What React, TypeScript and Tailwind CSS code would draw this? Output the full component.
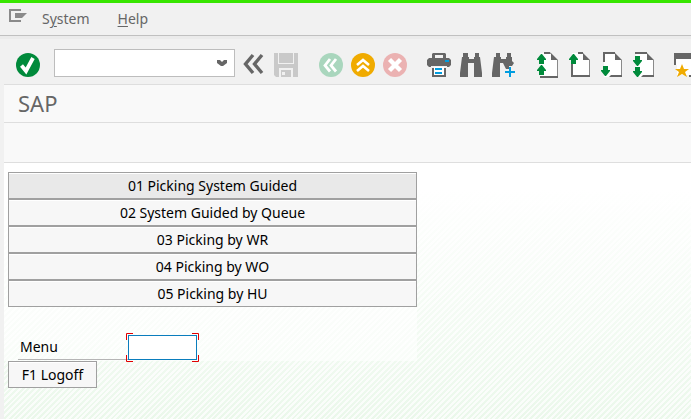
import type { ReactNode } from "react";

const entries = [
  "01 Picking System Guided",
  "02 System Guided by Queue",
  "03 Picking by WR",
  "04 Picking by WO",
  "05 Picking by HU",
];

function Tool({ label, children, disabled = false }: { label: string; children: ReactNode; disabled?: boolean }) {
  return (
    <button type="button" aria-label={label} disabled={disabled} className="h-6 w-6 shrink-0">
      <svg viewBox="0 0 24 24" className="block h-6 w-6 overflow-visible">{children}</svg>
    </button>
  );
}

function Up({ x, y }: { x: number; y: number }) {
  return <path transform={`translate(${x} ${y})`} fill="#008a3b" d="M4 0h1l4 5v1H7v4H2V6H0V5z" />;
}

function Down({ x, y }: { x: number; y: number }) {
  return <path transform={`translate(${x} ${y})`} fill="#008a3b" d="M2 0h5v4h2v1L5 10H4L0 5V4h2z" />;
}

function Sheet() {
  return (
    <>
      <path fill="#fff" d="M5 0h11l7 7v17H5z" />
      <path fill="#666" d="M16 0l7 7h-7z" />
      <path fill="#8a8a8a" d="M22 7h1v17h-1z" />
    </>
  );
}

function Toolbar() {
  return (
    <div className="flex h-[46px] items-end overflow-hidden border-b border-[#dedede] bg-[#f1f1f1] pb-[7px] pl-3">
      <Tool label="Enter">
        <circle cx="12" cy="12" r="12" fill="#008a3b" />
        <path d="M5.500 12.500l4.500 5.500L17 5" fill="none" stroke="#fff" strokeWidth="3.8" />
      </Tool>
      <div className="relative ml-[14px] w-[181px] shrink-0">
        <input aria-label="Command" className="block h-7 w-full border border-[#bdbdbd] bg-white px-2 pr-7 text-sm outline-none" />
        <svg viewBox="0 0 10 6" className="pointer-events-none absolute right-2 top-[11px] h-[6px] w-[10px]">
          <path d="M0 0h3l2 2 2-2h3v3L6 6H4L0 3z" fill="#666" />
        </svg>
      </div>
      <div className="ml-2 flex shrink-0">
        <Tool label="Collapse command field">
          <path d="M10 2L2.500 11l7.500 9M19 2l-7.500 9 7.500 9" fill="none" stroke="#666" strokeWidth="3.4" />
        </Tool>
      </div>
      <div className="ml-[7px] flex shrink-0">
        <Tool label="Save" disabled>
          <path fill="#c9c9c9" d="M0 0h4v11h16V0h4v24h-5v-9H5v9H2l-2-2z" />
          <path fill="#c9c9c9" d="M5 0h14v10H5z" />
          <path fillRule="evenodd" fill="#c9c9c9" d="M7 17h10v7H7zM8 19v3h3v-3z" />
        </Tool>
      </div>
      <div className="ml-[21px] flex shrink-0 gap-2">
        <Tool label="Back" disabled>
          <circle cx="12" cy="12" r="12" fill="#a9d6bd" />
          <path d="M11 6l-5 6.500 5 6M17 6l-5 6.500 5 6" fill="none" stroke="#fff" strokeWidth="2.8" />
        </Tool>
        <Tool label="Exit">
          <circle cx="12" cy="12" r="12" fill="#f0ab00" />
          <path d="M6 12l6-5 6 5M6 18l6-5 6 5" fill="none" stroke="#fff" strokeWidth="2.6" />
        </Tool>
        <Tool label="Cancel" disabled>
          <circle cx="12" cy="12" r="12" fill="#ebb2b2" />
          <path d="M6.500 6.500l11 11M17.500 6.500l-11 11" fill="none" stroke="#fff" strokeWidth="4.4" />
        </Tool>
      </div>
      <div className="ml-5 flex shrink-0 gap-2">
        <Tool label="Print">
          <path fillRule="evenodd" fill="#666" d="M5 1l1-1h12l1 1v4h3l2 2v5l-2 2H2l-2-2V7l2-2h3zM8 2v3h8V2z" />
          <path fill="#f1f1f1" d="M4 13h16v2H4z" />
          <path fill="#666" d="M5 15h14v9H5z" />
          <path fill="#fff" d="M7 14h10v8H7z" />
          <path fill="#009de0" d="M18 7h4v2h-4zM8 15h7v2H8zM8 19h7v2H8z" />
        </Tool>
        <Tool label="Find">
          <path fill="#666" d="M4 0h5v4h1v2h5V4h1V0h4v4h1l2 16v4h-8V10H9v14H1v-4L3 4h1z" />
        </Tool>
        <Tool label="Find next">
          <path fill="#666" d="M5 0h4v4h1v2h5V4h1V0h4v4h1v4l2 2-2 3h-3v3h-3l-3-6H9v14H1v-4L3 4h2z" />
          <path stroke="#009de0" strokeWidth="2" d="M19 14v10M14 19h10" />
        </Tool>
      </div>
      <div className="ml-5 flex shrink-0 gap-2">
        <Tool label="First page">
          <Sheet />
          <path fill="#666" d="M9-1h6l1 2H9zM5 23h18v2H5z" />
          <Up x={2} y={1} /><Up x={2} y={12} />
        </Tool>
        <Tool label="Previous page">
          <Sheet />
          <path fill="#666" d="M11-1h5v2h-5zM4 10h2v12h17v2H4z" />
          <Up x={2} y={1} />
        </Tool>
        <Tool label="Next page">
          <Sheet />
          <path fill="#666" d="M4-1h12v2H6v8H4zM12 22h11v2H10z" />
          <Down x={2} y={13} />
        </Tool>
        <Tool label="Last page">
          <Sheet />
          <path fill="#666" d="M4-1h12v2H4zM12 22h11v2H10z" />
          <Down x={2} y={3} /><Down x={2} y={14} />
        </Tool>
      </div>
      <div className="ml-[19px] flex shrink-0">
        <Tool label="Create session">
          <path fill="#fff" d="M2 6h22v16H2z" />
          <path fill="#666" d="M0 0h24v6H2v6H0zM15 22h9v2h-9z" />
          <path fill="#f1f1f1" d="M0 12h3v12H0zM3 22h12v2H3z" />
          <path fill="#f0ab00" d="M8 11l2 5h5l-4 3 2 5-5-3-5 3 2-5-4-3h5z" />
        </Tool>
      </div>
    </div>
  );
}

export default function App() {
  return (
    <div className="flex min-h-screen flex-col overflow-hidden border-t-[3px] border-[#38e600] bg-[#f1f1f1] font-['Noto_Sans','Open_Sans',sans-serif] text-sm text-black">
      <nav className="flex h-[33px] items-center border-b border-[#c0c0c0] pl-2 text-[#666]">
        <button type="button" aria-label="Window menu" className="mb-1.5 h-[14px] w-5">
          <svg viewBox="0 0 20 14" className="block h-[14px] w-5">
            <path fill="#8a8a8a" d="M1 0h12v2H3v9h10v2H1z" />
            <path fill="#8a8a8a" d="M7 4h12l-5 5H7z" />
          </svg>
        </button>
        <button type="button" className="ml-[14px]">S<u className="underline-offset-2">y</u>stem</button>
        <button type="button" className="ml-7"><u className="underline-offset-2">H</u>elp</button>
      </nav>
      <div className="h-[3px] bg-[#ebebeb]" />
      <div className="ml-1 flex flex-1 flex-col">
        <Toolbar />
        <h1 className="flex h-[38px] items-center border-b border-[#dedede] bg-[#f9f9f9] pl-[14px] text-[22px] text-[#666]">SAP</h1>
        <div className="h-10 border-b border-[#dedede] bg-[#f9f9f9]" />
        <main className="flex-1 bg-[linear-gradient(180deg,#fff_10%,#ffffff00_100%),repeating-linear-gradient(135deg,#ebf8eb_0px,#ebf8eb_2px,#fafdfa_2px,#fafdfa_4px)] pb-8">
          <div className="w-[413px] bg-white/60 pl-1 pt-[9px]">
            <div className="flex flex-col">
              {entries.map((text, i) => (
                <button key={text} type="button" className={`h-[27px] border border-[#a0a0a0] text-center shadow-[inset_0_1px_0_#fff] ${i === 0 ? "bg-[#e9e9e9]" : "bg-[#f7f7f7]"}`}>
                  {text}
                </button>
              ))}
            </div>
            <div className="mt-7 flex h-[26px] pl-[10px]">
              <label htmlFor="menu" className="flex h-[25px] w-[110px] items-center border-b border-[#b5b5b5] pl-[2px]">Menu</label>
              <div className="relative">
                <input id="menu" className="block h-[25px] w-[69px] border border-[#0a7dbd] bg-white px-1 outline-none" />
                <svg viewBox="0 0 73 29" className="pointer-events-none absolute -left-0.5 -top-0.5 h-[29px] w-[73px]">
                  <path d="M.5 7V.5H7M66 .5h6.500V7M72.500 22v6.500H66M7 28.500H.5V22" fill="none" stroke="#e00000" />
                </svg>
              </div>
            </div>
          </div>
          <button type="button" className="ml-1 h-[27px] w-[89px] border border-[#a0a0a0] bg-[#f7f7f7] shadow-[inset_0_1px_0_#fff]">F1 Logoff</button>
        </main>
      </div>
    </div>
  );
}
